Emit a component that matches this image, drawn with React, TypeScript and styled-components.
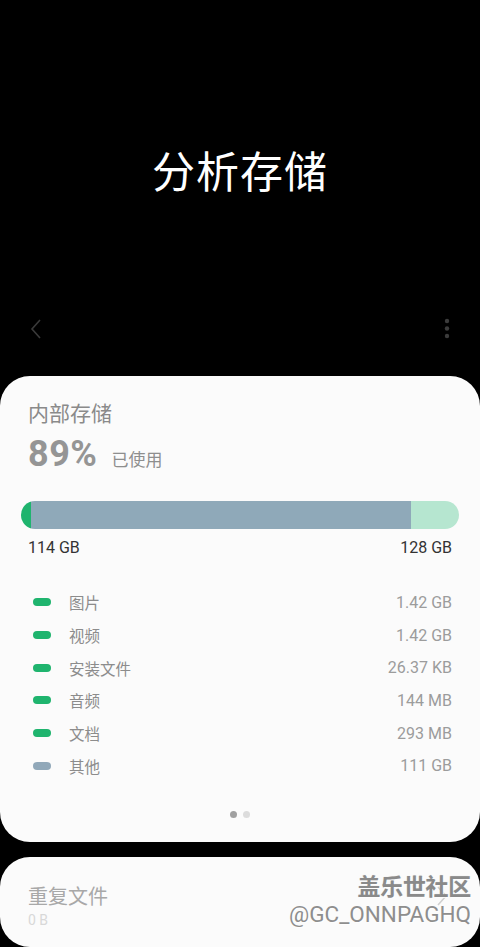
import React from "react";
import styled, { createGlobalStyle } from "styled-components";

const Global = createGlobalStyle`
  html, body { margin: 0; padding: 0; background: #000; }
  body { font-family: Roboto, "Noto Sans CJK SC", sans-serif; width: 480px; height: 947px; overflow: hidden; }
`;

const Page = styled.div`
  width: 480px;
  height: 947px;
  background: #000;
  display: flex;
  flex-direction: column;
  overflow: hidden;
`;

const Hero = styled.div`
  height: 301px;
  display: flex;
  align-items: center;
  justify-content: center;
  padding-top: 36px;
  box-sizing: border-box;
`;

const Title = styled.h1`
  margin: 0;
  color: #fff;
  font-family: "Noto Sans CJK SC", sans-serif;
  font-weight: 400;
  font-size: 43px;
  letter-spacing: 1px;
`;

const Toolbar = styled.div`
  height: 56px;
  display: flex;
  align-items: center;
  justify-content: space-between;
  padding: 0 30px 0 28px;
`;

const IconBtn = styled.div`
  display: flex;
  align-items: center;
`;

const Card = styled.div<{ $h?: number }>`
  background: #fbfbfb;
  border-radius: 30px;
  margin-top: ${(p) => (p.$h ? 19 : 15)}px;
  ${(p) => (p.$h ? `height: ${p.$h}px;` : "flex: 1;")}
  box-sizing: border-box;
  padding: 22px 28px 0 28px;
  display: flex;
  flex-direction: column;
  position: relative;
`;

const CardTitle = styled.div`
  font-family: "Noto Sans CJK SC", sans-serif;
  font-size: 21px;
  line-height: 28px;
  color: #8a8a8a;
`;

const UsageRow = styled.div`
  display: flex;
  align-items: baseline;
  margin-top: 7px;
  gap: 14px;
`;

const Percent = styled.span`
  font-family: Roboto, sans-serif;
  font-weight: 700;
  font-size: 36px;
  color: #959595;
  letter-spacing: 0.5px;
`;

const Used = styled.span`
  font-family: "Noto Sans CJK SC", sans-serif;
  font-size: 17px;
  color: #8e8e8e;
`;

const Bar = styled.div`
  margin: 26px -7px 0 -7px;
  height: 28px;
  border-radius: 14px;
  overflow: hidden;
  display: flex;
`;

const Seg = styled.div<{ $c: string }>`
  background: ${(p) => p.$c};
  height: 100%;
`;

const Scale = styled.div`
  display: flex;
  justify-content: space-between;
  margin-top: 9px;
  font-size: 16px;
  color: #333;
  line-height: 20px;
`;

const List = styled.div`
  margin-top: 28px;
  display: flex;
  flex-direction: column;
`;

const Item = styled.div`
  height: 32.7px;
  display: flex;
  align-items: center;
`;

const Pill = styled.span<{ $c: string }>`
  width: 18px;
  height: 8px;
  border-radius: 4px;
  background: ${(p) => p.$c};
  margin-left: 5px;
  margin-right: 18px;
`;

const Label = styled.span`
  font-family: "Noto Sans CJK SC", sans-serif;
  font-size: 15.5px;
  color: #8c8c8c;
  flex: 1;
`;

const Value = styled.span`
  font-size: 16px;
  color: #9c9c9c;
`;

const Pager = styled.div`
  display: flex;
  justify-content: center;
  gap: 6px;
  margin-top: 29px;
`;

const Dot = styled.span<{ $on?: boolean }>`
  width: 7px;
  height: 7px;
  border-radius: 50%;
  background: ${(p) => (p.$on ? "#a0a0a0" : "#dcdcdc")};
`;

const DupTitle = styled.div`
  font-family: "Noto Sans CJK SC", sans-serif;
  font-size: 20px;
  line-height: 26px;
  color: #a8a8a8;
  margin-top: 4px;
`;

const DupSize = styled.div`
  font-size: 14px;
  color: #d8d8d8;
  margin-top: 3px;
`;

const Chevron = styled.div`
  position: absolute;
  right: 32px;
  top: 28px;
`;

const Watermark = styled.div`
  position: absolute;
  right: 9px;
  top: 13px;
  display: flex;
  flex-direction: column;
  align-items: flex-end;
  color: #8a8a8a;
`;

const WmTop = styled.div`
  font-family: "Noto Sans CJK SC", sans-serif;
  font-weight: 700;
  font-size: 23px;
  line-height: 30px;
  letter-spacing: -0.3px;
  text-shadow: 1px 1px 0 rgba(255,255,255,0.9), 0 0 1px rgba(0,0,0,0.2);
`;

const WmBottom = styled.div`
  font-size: 22.5px;
  line-height: 28px;
  color: #8e8e8e;
  text-shadow: 1px 1px 0 rgba(255,255,255,0.9);
`;

const items = [
  { label: "图片", value: "1.42 GB", c: "#1fb46e" },
  { label: "视频", value: "1.42 GB", c: "#1fb46e" },
  { label: "安装文件", value: "26.37 KB", c: "#1fb46e" },
  { label: "音频", value: "144 MB", c: "#1fb46e" },
  { label: "文档", value: "293 MB", c: "#1fb46e" },
  { label: "其他", value: "111 GB", c: "#91a8b9" },
];

export default function App() {
  return (
    <Page>
      <Global />
      <Hero>
        <Title>分析存储</Title>
      </Hero>
      <Toolbar>
        <IconBtn>
          <svg width="16" height="20" viewBox="0 0 16 20">
            <path d="M12 1 L4 10 L12 19" fill="none" stroke="#3a3a3a" strokeWidth="1.6" />
          </svg>
        </IconBtn>
        <IconBtn>
          <svg width="6" height="22" viewBox="0 0 6 22">
            <circle cx="3" cy="3" r="2.2" fill="#3c3c3c" />
            <circle cx="3" cy="10.5" r="2.2" fill="#3c3c3c" />
            <circle cx="3" cy="18" r="2.2" fill="#3c3c3c" />
          </svg>
        </IconBtn>
      </Toolbar>
      <Card $h={466}>
        <CardTitle>内部存储</CardTitle>
        <UsageRow>
          <Percent>89%</Percent>
          <Used>已使用</Used>
        </UsageRow>
        <Bar>
          <Seg $c="#1fb46e" style={{ width: 10 }} />
          <Seg $c="#8fa9b9" style={{ width: 380 }} />
          <Seg $c="#b6e6d0" style={{ flex: 1 }} />
        </Bar>
        <Scale>
          <span>114 GB</span>
          <span>128 GB</span>
        </Scale>
        <List>
          {items.map((it) => (
            <Item key={it.label}>
              <Pill $c={it.c} />
              <Label>{it.label}</Label>
              <Value>{it.value}</Value>
            </Item>
          ))}
        </List>
        <Pager>
          <Dot $on />
          <Dot />
        </Pager>
      </Card>
      <Card>
        <DupTitle>重复文件</DupTitle>
        <DupSize>0 B</DupSize>
        <Chevron>
          <svg width="12" height="22" viewBox="0 0 12 22">
            <path d="M2 2 L10 11 L2 20" fill="none" stroke="#d0d0d0" strokeWidth="1.6" />
          </svg>
        </Chevron>
        <Watermark>
          <WmTop>盖乐世社区</WmTop>
          <WmBottom>@GC_ONNPAGHQ</WmBottom>
        </Watermark>
      </Card>
    </Page>
  );
}
